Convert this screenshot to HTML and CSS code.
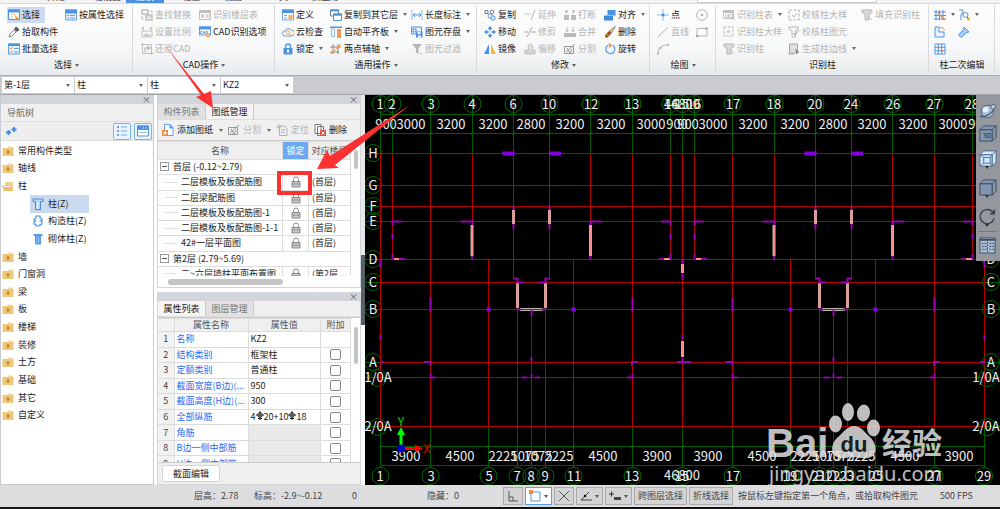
FILE: index.html
```html
<!DOCTYPE html>
<html lang="zh-CN">
<head>
<meta charset="utf-8">
<title>图纸管理</title>
<link rel="stylesheet" href="styles.css">
</head>
<body>
<svg class="sprite" aria-hidden="true">
  <symbol id="i-select" viewBox="0 0 12 12"><path d="M.5 1h11v9.500h-11z" fill="#fff" stroke="#4c94e2"/><path d="M0 .5h12v3H0z" fill="#4c94e2"/><path d="M3 5.500h5M3 8h2" stroke="#f0a850" stroke-dasharray="1.500 1"/><path d="M7 6l4 4-2 .2-1 1.600z" fill="#e8943c"/></symbol>
  <symbol id="i-prop" viewBox="0 0 12 12"><path d="M.5 1h11v10h-11z" fill="#e8f2fd" stroke="#5c9fe6"/><path d="M0 .5h12v4H0z" fill="#4c94e2"/><path d="M2 6.500h2M5 6.500h5M2 9h2M5 9h5" stroke="#5c9fe6"/></symbol>
  <symbol id="i-pick" viewBox="0 0 12 12"><path d="M1 11l1-3 4-4 2 2-4 4z" fill="#fff" stroke="#888"/><path d="M6 3l2-2.500 3.500 3L9 6z" fill="#555"/></symbol>
  <symbol id="i-batch" viewBox="0 0 12 12"><path d="M.5 1h11v10h-11z" fill="#eaf3fd" stroke="#5c9fe6"/><path d="M0 .5h12v2.500H0z" fill="#4c94e2"/><path d="M2 5l1 1 1.500-2M2 8.500l1 1 1.500-2" fill="none" stroke="#e8943c"/><path d="M6 5.500h4.500M6 9h4.500" stroke="#5c9fe6"/></symbol>
  <symbol id="i-find" viewBox="0 0 12 12"><path d="M1 1h6v4H1zM5 6h6v5H5z" fill="none" stroke="#b5b5b5" stroke-width="1.500"/><path d="M1 7v3h2M9 2h2v2" fill="none" stroke="#b5b5b5"/><path d="M6 8h4" stroke="#b5b5b5"/></symbol>
  <symbol id="i-table" viewBox="0 0 12 12"><path d="M.5 1.500h11v9h-11z" fill="none" stroke="#b5b5b5"/><path d="M.5 2h11v2H.5zM2 5.500h3v3H2z" fill="#b5b5b5"/><path d="M6.500 6h4M6.500 8h4" stroke="#b5b5b5"/></symbol>
  <symbol id="i-scale" viewBox="0 0 12 12"><path d="M1 5h10v6H1z" fill="none" stroke="#b5b5b5"/><path d="M2 10l3-3 2 2 1-1 2 2zM0 2.500L3 .5v4zM12 2.500L9 .5v4z" fill="#b5b5b5"/></symbol>
  <symbol id="i-cad" viewBox="0 0 12 12"><path d="M.5 1h11v8h-11z" fill="#fff" stroke="#5c9fe6"/><path d="M0 .5h12v3H0z" fill="#4c94e2"/><path d="M3 5.500H1.500v2H3M4 8l1-3 1 3M7 5.500v2h1.500v-2z" fill="none" stroke="#4c94e2" stroke-width=".8"/><circle cx="9" cy="9" r="2.200" fill="#f09a48"/><path d="M8 9h2M9 8v2" stroke="#fff" stroke-width=".6"/></symbol>
  <symbol id="i-restore" viewBox="0 0 12 12"><path d="M1.500 1.500h9v9h-9z" fill="none" stroke="#b5b5b5"/><path d="M4 9V5h4M6.500 3L9 5 6.500 7M0 1.500h3M9 10.500h3" fill="none" stroke="#b5b5b5" stroke-width="1.300"/></symbol>
  <symbol id="i-define" viewBox="0 0 12 12"><path d="M.5 1h11v10h-11z" fill="#fff" stroke="#6caaea"/><path d="M0 .5h12v3.500H0z" fill="#4c94e2"/><path d="M2 6.500h3M2 9h3" stroke="#6caaea"/><path d="M6.500 6h4v4h-4z" fill="#f6a860"/></symbol>
  <symbol id="i-cloud" viewBox="0 0 12 12"><path d="M3 10a2.500 2.500 0 010-5 3.300 3.300 0 016-1 3 3 0 01.5 6z" fill="#fff" stroke="#5c9fe6"/><circle cx="6" cy="6.300" r="1.800" fill="none" stroke="#f09a48"/><path d="M7.300 7.600l2 2" stroke="#f09a48"/></symbol>
  <symbol id="i-lockb" viewBox="0 0 12 12"><path d="M3.500 5V3.500a2.500 2.500 0 015 0V5" fill="none" stroke="#4c94e2" stroke-width="1.400"/><path d="M1.500 5h9v6.500h-9z" fill="#4c94e2"/><path d="M5 6.500h2v3H5z" fill="#fff"/></symbol>
  <symbol id="i-copyfl" viewBox="0 0 12 12"><path d="M.5 1h8v6h-8z" fill="#fff" stroke="#777"/><path d="M0 .5h9v2H0z" fill="#4c94e2"/><path d="M3.500 5h8v6.500h-8z" fill="#fff" stroke="#4c94e2"/><path d="M3 4.500h9v2.200H3z" fill="#4c94e2"/></symbol>
  <symbol id="i-align-slab" viewBox="0 0 12 12"><path d="M0 .5h12v1.500H0z" fill="#4c94e2"/><path d="M1.500 3h3v7.500h-3z" fill="#fff" stroke="#8bb9ec"/><path d="M7 3h4v9H7z" fill="#f3955b"/></symbol>
  <symbol id="i-axis" viewBox="0 0 12 12"><path d="M3 1v10M8 1v10M0 4h11M0 9h9" stroke="#888" fill="none"/><path d="M1 11L11 1" stroke="#f09a48"/></symbol>
  <symbol id="i-dim" viewBox="0 0 12 12"><path d="M1 1v10M11 1v10" stroke="#9cc0ea"/><path d="M2 6h8M4 4L2 6l2 2M8 4l2 2-2 2" fill="none" stroke="#4c94e2"/></symbol>
  <symbol id="i-save" viewBox="0 0 12 12"><path d="M.5 1h10v7h-10z" fill="#eaf3fd" stroke="#4c94e2"/><path d="M2 3h3v3H2z" fill="none" stroke="#4c94e2"/><path d="M5 5.500h6.500v6H5z" fill="#4c94e2"/><path d="M6.500 6h3v2h-3zM7 9.500h3v2H7z" fill="#fff"/></symbol>
  <symbol id="i-filter" viewBox="0 0 12 12"><path d="M1 1h10L7.500 5.500V11L5 9.500v-4z" fill="#aaa"/><path d="M9 10.500h2" stroke="#aaa"/></symbol>
  <symbol id="i-copy" viewBox="0 0 12 12"><path d="M1 1.500h3v3H1z" fill="none" stroke="#777"/><circle cx="8" cy="3" r="1.800" fill="none" stroke="#777"/><circle cx="6" cy="7" r="2" fill="#fff" stroke="#4c94e2"/><circle cx="9" cy="9" r="2.200" fill="#d6e8fc" stroke="#4c94e2"/></symbol>
  <symbol id="i-move" viewBox="0 0 12 12"><path d="M6 0l2.300 3H3.700zM6 12l2.300-3H3.700zM0 6l3-2.300v4.600zM12 6L9 3.700v4.600z" fill="#3e8be0"/><path d="M6 2v2.500M6 7.500V10M2 6h2.500M7.500 6H10" stroke="#3e8be0" stroke-width="1.400"/></symbol>
  <symbol id="i-mirror" viewBox="0 0 12 12"><path d="M5 1v10H0z" fill="#4c94e2"/><path d="M7 1v10h5z" fill="#f4b942"/></symbol>
  <symbol id="i-extend" viewBox="0 0 12 12"><path d="M0 5h7" stroke="#aaa" stroke-dasharray="2 1"/><path d="M7 11l4-10" stroke="#aaa"/></symbol>
  <symbol id="i-trim" viewBox="0 0 12 12"><path d="M0 6h4M7 6h5M3 11L8 1" stroke="#999" fill="none"/></symbol>
  <symbol id="i-offset" viewBox="0 0 12 12"><path d="M3 7h2C3 2 5 1 6.500 1S10 2 8 7h3v4H1V7z" fill="#ddd" stroke="#b5b5b5"/><path d="M1 9h10" stroke="#b5b5b5"/></symbol>
  <symbol id="i-break" viewBox="0 0 12 12"><path d="M0 6h5v5H0zM7 6h5v5H7z" fill="#b0b0b0"/><path d="M2.500 5V1M9.500 5V1M1 3l1.500-2L4 3M8 3l1.500-2L11 3" fill="none" stroke="#b0b0b0"/></symbol>
  <symbol id="i-merge" viewBox="0 0 12 12"><path d="M0 7h12v4H0z" fill="#b0b0b0"/><path d="M3 1v5M9 1v5M1.500 4L3 6l1.500-2M7.500 4L9 6l1.500-2" fill="none" stroke="#b0b0b0"/></symbol>
  <symbol id="i-split" viewBox="0 0 12 12"><path d="M.5 3.500h9v7h-9z" fill="none" stroke="#888"/><path d="M2 9l9-8M3 5l3 5 2-4" fill="none" stroke="#888"/></symbol>
  <symbol id="i-align" viewBox="0 0 12 12"><path d="M3.500 1h8v5h-8z" fill="#4c94e2"/><path d="M0 7h9v4.500H0z" fill="#3e8be0"/><path d="M0 6.500h12" stroke="#9cc0ea"/></symbol>
  <symbol id="i-erase" viewBox="0 0 12 12"><path d="M11.500.5L5 5l2.500 2z" fill="#f6c28a" stroke="#555" stroke-width=".6"/><path d="M5 5l2.500 2L4 11.500H1.500L1 9z" fill="#9b4a1c"/><path d="M2 8l3 2" stroke="#e8c33c"/></symbol>
  <symbol id="i-rotate" viewBox="0 0 12 12"><path d="M4 2.300A4.500 4.500 0 108.500 2.200" fill="none" stroke="#68a8ec" stroke-width="1.500"/><path d="M4.500 0l4 2-3.500 3z" fill="#f09a48"/></symbol>
  <symbol id="i-point" viewBox="0 0 12 12"><path d="M0 6h12M6 0v12" stroke="#8cb4e0"/><path d="M4.700 4.700h2.600v2.600H4.700z" fill="#3e8be0"/></symbol>
  <symbol id="i-line" viewBox="0 0 12 12"><path d="M1 11L11 1" stroke="#aaa"/></symbol>
  <symbol id="i-arc" viewBox="0 0 12 12"><path d="M1 11C1 5 4 2 11 2" fill="none" stroke="#aaa"/><path d="M0 9.500h2v2H0zM2.500 4h2v2h-2zM10 1h2v2h-2z" fill="#aaa"/></symbol>
  <symbol id="i-circle" viewBox="0 0 12 12"><circle cx="6" cy="6" r="5.300" fill="none" stroke="#aaa"/><path d="M5 5h2v2H5z" fill="#999"/></symbol>
  <symbol id="i-rect" viewBox="0 0 12 12"><path d="M1 2.500h10v7.500H1z" fill="none" stroke="#aaa"/><path d="M9.500 1.500h2v2h-2zM0 9h2v2H0z" fill="#888"/></symbol>
  <symbol id="i-rectable" viewBox="0 0 12 12"><path d="M.5 1.500h10v8h-10z" fill="none" stroke="#b5b5b5"/><path d="M.5 1h10v3H.5z" fill="#b5b5b5"/><path d="M2 6h4M2 8h4" stroke="#b5b5b5"/><circle cx="8" cy="7" r="2" fill="#fff" stroke="#aaa"/><path d="M9.500 8.500l2 2.500" stroke="#aaa"/></symbol>
  <symbol id="i-dash" viewBox="0 0 12 12"><path d="M1 1h9v9H1z" fill="none" stroke="#aaa" stroke-dasharray="2.500 1.200"/><path d="M4 4h3v3H4z" fill="#ccc"/></symbol>
  <symbol id="i-tcol" viewBox="0 0 12 12"><path d="M1 1h10v2.500L8 5v6H4V5L1 3.500z" fill="#d5d5d5" stroke="#aaa"/><path d="M7 7l4 4" stroke="#aaa"/></symbol>
  <symbol id="i-check" viewBox="0 0 12 12"><path d="M1 1h10v10H1z" fill="none" stroke="#aaa" stroke-width="1.200" stroke-dasharray="3 1.500"/><path d="M4 6l2 2 3-4" fill="none" stroke="#aaa"/></symbol>
  <symbol id="i-checkt" viewBox="0 0 12 12"><path d="M1 1h9v2L7.500 4.500V11H4V4.500L1 3z" fill="none" stroke="#aaa"/><path d="M5 7l2 2 4-5" fill="none" stroke="#999"/></symbol>
  <symbol id="i-edge" viewBox="0 0 12 12"><path d="M1.500 1h8v9h-8z" fill="#ddd" stroke="#999"/><path d="M7 5l4.500 4.500-2 .2-.8 2z" fill="#777"/><path d="M0 11h6" stroke="#999"/></symbol>
  <symbol id="i-grid1" viewBox="0 0 12 12"><path d="M2 1v10M5.500 1v10M9 1v10M0 3h12M0 6.500h12M0 10h12" stroke="#4c94e2"/><path d="M4 4l7 7" stroke="#f08a3c" stroke-width="1.500"/></symbol>
  <symbol id="i-search" viewBox="0 0 12 12"><path d="M1 1h4v3L3 5v6" fill="none" stroke="#4c94e2"/><circle cx="7.500" cy="6" r="2.500" fill="#fff" stroke="#4c94e2"/><path d="M9 8l1.500 1.500" stroke="#4c94e2"/><circle cx="10.500" cy="10" r="1.500" fill="#f09a1c"/></symbol>
  <symbol id="i-corner" viewBox="0 0 12 12"><path d="M1 1h4v5h5v5H1z" fill="#eaf3fd" stroke="#4c94e2"/><path d="M6 1.500c2.500 0 4 1 4.500 3" fill="none" stroke="#f08a3c"/></symbol>
  <symbol id="i-tilt" viewBox="0 0 12 12"><path d="M6 1l5 5-2.500.5L3 11.500.5 9l5-5.500z" fill="#a9cdf5" stroke="#4c94e2"/></symbol>
  <symbol id="i-grid2" viewBox="0 0 12 12"><path d="M1 1h10v10H1zM4.300 1v10M7.700 1v10M1 4.300h10M1 7.700h10" fill="#fff" stroke="#4c94e2"/><path d="M3.500 3.500h2v2h-2zM7 7h2v2H7z" fill="#e87a4c"/></symbol>
  <symbol id="i-folder" viewBox="0 0 12 12"><path d="M6 1.500h5V4H6z" fill="#f6d9a0"/><path d="M.5 3h11v8H.500z" fill="#eec67c"/><path d="M6 5v4M4 7h4" stroke="#bb8420" stroke-width="1.200"/></symbol>
  <symbol id="i-open" viewBox="0 0 12 12"><path d="M3 2h8v9H1l2-3z" fill="#f1d08d"/><path d="M0 5.500h9L11 11H2z" fill="#eec06c"/><path d="M2 6.500h6.500" stroke="#fff"/></symbol>
  <symbol id="i-col" viewBox="0 0 12 12"><path d="M1 1h10v2.500H8.500v8h-5v-8H1z" fill="#b9d7f8" stroke="#4c8bd0"/><path d="M5.500 4v7" stroke="#fff"/></symbol>
  <symbol id="i-gcol" viewBox="0 0 12 12"><path d="M4 1h4v2l2 1v1.500L8.500 6 10 7v2l-2 .5V11H4V9.500L2 9V7l1.500-1L2 5V4l2-1z" fill="#fff" stroke="#4c94e2" stroke-width="1.200"/></symbol>
  <symbol id="i-brick" viewBox="0 0 12 12"><path d="M1.500 1h9v2H9v8.500H3V3H1.500z" fill="#5c9fe6"/><path d="M4 5h3M6 7h2M4 9h3" stroke="#a9cdf5"/></symbol>
  <symbol id="i-add" viewBox="0 0 12 12"><path d="M2.500.5h5.500l3 3v8h-8.500z" fill="#fff" stroke="#5c9fe6"/><path d="M8 .5V4h3" fill="#5c9fe6" stroke="#5c9fe6"/><path d="M0 6h6v6H0z" fill="#ef8a3c"/><path d="M3 7v4M1 9h4" stroke="#fff"/></symbol>
  <symbol id="i-locate" viewBox="0 0 12 12"><path d="M3.500 2h5l2.500 2.500v7H3.500zM5 6h4M5 8.500h4" fill="none" stroke="#aaa"/><path d="M3 0v6M0 3h6" stroke="#aaa"/></symbol>
  <symbol id="i-del" viewBox="0 0 12 12"><path d="M1 .5h6v9H1zM3.500 2.500h6v9h-6z" fill="#fff" stroke="#777"/><path d="M6 6h6v6H6z" fill="#d9504c"/><path d="M7.500 7.500l3 3M10.500 7.500l-3 3" stroke="#fff"/></symbol>
  <symbol id="i-lock" viewBox="0 0 12 12"><path d="M3.500 5V3.500a2.500 2.500 0 015 0V5" fill="none" stroke="#888"/><path d="M2 5.500h8v5.500H2z" fill="#c9c9c9" stroke="#8b8b8b"/><path d="M2 8h8" stroke="#8b8b8b"/></symbol>
  <symbol id="i-cube" viewBox="0 0 20 20"><path d="M2 6h13v12H2z"/><path d="M2 6l4-4h13l-4 4zM15 18l4-4V2l-4 4z"/></symbol>
</svg>

<nav class="tabs" aria-label="功能区">
  <button class="t-first">开始</button><button>工程设置</button><button class="on">建模</button><button>工程量</button><button>视图</button><button>工具</button><button>云应用</button>
  <span class="tabsearch"></span>
</nav>

<header class="ribbon">
  <section class="group g-select">
    <div class="cmds">
      <button class="cmd on"><svg><use href="#i-select"/></svg>选择</button>
      <button class="cmd"><svg><use href="#i-pick"/></svg>拾取构件</button>
      <button class="cmd"><svg><use href="#i-batch"/></svg>批量选择</button>
      <button class="cmd"><svg><use href="#i-prop"/></svg>按属性选择</button>
    </div>
    <button class="title more">选择</button>
  </section>
  <section class="group g-cad">
    <div class="cmds">
      <button class="cmd" disabled><svg><use href="#i-find"/></svg>查找替换</button>
      <button class="cmd" disabled><svg><use href="#i-scale"/></svg>设置比例</button>
      <button class="cmd" disabled><svg><use href="#i-restore"/></svg>还原CAD</button>
      <button class="cmd" disabled><svg><use href="#i-table"/></svg>识别楼层表</button>
      <button class="cmd"><svg><use href="#i-cad"/></svg>CAD识别选项</button>
    </div>
    <button class="title more">CAD操作</button>
  </section>
  <section class="group g-common">
    <div class="cmds">
      <button class="cmd"><svg><use href="#i-define"/></svg>定义</button>
      <button class="cmd"><svg><use href="#i-cloud"/></svg>云检查</button>
      <button class="cmd more"><svg><use href="#i-lockb"/></svg>锁定</button>
      <button class="cmd more"><svg><use href="#i-copyfl"/></svg>复制到其它层</button>
      <button class="cmd more"><svg><use href="#i-align-slab"/></svg>自动平齐板</button>
      <button class="cmd more"><svg><use href="#i-axis"/></svg>两点辅轴</button>
      <button class="cmd more"><svg><use href="#i-dim"/></svg>长度标注</button>
      <button class="cmd more"><svg><use href="#i-save"/></svg>图元存盘</button>
      <button class="cmd" disabled><svg><use href="#i-filter"/></svg>图元过滤</button>
    </div>
    <button class="title more">通用操作</button>
  </section>
  <section class="group g-modify">
    <div class="cmds">
      <button class="cmd"><svg><use href="#i-copy"/></svg>复制</button>
      <button class="cmd"><svg><use href="#i-move"/></svg>移动</button>
      <button class="cmd"><svg><use href="#i-mirror"/></svg>镜像</button>
      <button class="cmd" disabled><svg><use href="#i-extend"/></svg>延伸</button>
      <button class="cmd" disabled><svg><use href="#i-trim"/></svg>修剪</button>
      <button class="cmd" disabled><svg><use href="#i-offset"/></svg>偏移</button>
      <button class="cmd" disabled><svg><use href="#i-break"/></svg>打断</button>
      <button class="cmd" disabled><svg><use href="#i-merge"/></svg>合并</button>
      <button class="cmd" disabled><svg><use href="#i-split"/></svg>分割</button>
      <button class="cmd more"><svg><use href="#i-align"/></svg>对齐</button>
      <button class="cmd"><svg><use href="#i-erase"/></svg>删除</button>
      <button class="cmd"><svg><use href="#i-rotate"/></svg>旋转</button>
    </div>
    <button class="title more">修改</button>
  </section>
  <section class="group g-draw">
    <div class="cmds">
      <button class="cmd"><svg><use href="#i-point"/></svg>点</button>
      <button class="cmd" disabled><svg><use href="#i-line"/></svg>直线</button>
      <button class="cmd" disabled aria-label="弧线"><svg><use href="#i-arc"/></svg></button>
      <button class="cmd" disabled aria-label="圆"><svg><use href="#i-circle"/></svg></button>
      <button class="cmd" disabled aria-label="矩形"><svg><use href="#i-rect"/></svg></button>
    </div>
    <button class="title more">绘图</button>
  </section>
  <section class="group g-recog">
    <div class="cmds">
      <button class="cmd more" disabled><svg><use href="#i-rectable"/></svg>识别柱表</button>
      <button class="cmd" disabled><svg><use href="#i-dash"/></svg>识别柱大样</button>
      <button class="cmd" disabled><svg><use href="#i-tcol"/></svg>识别柱</button>
      <button class="cmd" disabled><svg><use href="#i-check"/></svg>校核柱大样</button>
      <button class="cmd" disabled><svg><use href="#i-checkt"/></svg>校核柱图元</button>
      <button class="cmd more" disabled><svg><use href="#i-edge"/></svg>生成柱边线</button>
      <button class="cmd" disabled><svg><use href="#i-tcol"/></svg>填充识别柱</button>
    </div>
    <button class="title">识别柱</button>
  </section>
  <section class="group g-edit">
    <div class="cmds">
      <button class="cmd more" aria-label="调整柱网"><svg><use href="#i-grid1"/></svg></button>
      <button class="cmd" aria-label="转角"><svg><use href="#i-corner"/></svg></button>
      <button class="cmd" aria-label="网格"><svg><use href="#i-grid2"/></svg></button>
      <button class="cmd more" aria-label="查改标注"><svg><use href="#i-search"/></svg></button>
      <button class="cmd" aria-label="设置斜柱"><svg><use href="#i-tilt"/></svg></button>
    </div>
    <button class="title">柱二次编辑</button>
  </section>
</header>

<div class="context">
  <label class="combo"><select aria-label="楼层"><option>第-1层</option></select></label>
  <label class="combo"><select aria-label="类别"><option>柱</option></select></label>
  <label class="combo"><select aria-label="类型"><option>柱</option></select></label>
  <label class="combo"><select aria-label="构件"><option>KZ2</option></select></label>
</div>

<main class="work">
  <aside class="nav">
    <div class="strip"><button aria-label="关闭导航树">×</button></div>
    <h2>导航树</h2>
    <div class="navbar">
      <button class="plus" aria-label="添加"><svg viewBox="0 0 12 12"><path d="M3.500 5v5M1 7.500h5M9 2v5M6.500 4.500h5" stroke="#3e8be0" stroke-width="1.800"/></svg></button>
      <button class="view" aria-label="列表视图"><svg viewBox="0 0 12 12"><path d="M1 2h2M1 6h2M1 10h2" stroke="#3e8be0" stroke-width="1.500"/><path d="M5 2h6M5 6h6M5 10h6" stroke="#6caaea"/></svg></button>
      <button class="view" aria-label="窗口视图"><svg viewBox="0 0 12 12"><path d="M.5 1h11v10H.5z" fill="#fff" stroke="#4c94e2"/><path d="M0 .5h12V5H0z" fill="#4c94e2"/><path d="M6 3h1M8.500 3h1" stroke="#fff"/><path d="M2 7.500h8" stroke="#9cc0ea"/></svg></button>
    </div>
    <ul class="tree">
      <li><svg><use href="#i-folder"/></svg>常用构件类型</li>
      <li><svg><use href="#i-folder"/></svg>轴线</li>
      <li><svg><use href="#i-open"/></svg>柱</li>
      <li class="leaf on"><svg><use href="#i-col"/></svg>柱(Z)</li>
      <li class="leaf"><svg><use href="#i-gcol"/></svg>构造柱(Z)</li>
      <li class="leaf"><svg><use href="#i-brick"/></svg>砌体柱(Z)</li>
      <li><svg><use href="#i-folder"/></svg>墙</li>
      <li><svg><use href="#i-folder"/></svg>门窗洞</li>
      <li><svg><use href="#i-folder"/></svg>梁</li>
      <li><svg><use href="#i-folder"/></svg>板</li>
      <li><svg><use href="#i-folder"/></svg>楼梯</li>
      <li><svg><use href="#i-folder"/></svg>装修</li>
      <li><svg><use href="#i-folder"/></svg>土方</li>
      <li><svg><use href="#i-folder"/></svg>基础</li>
      <li><svg><use href="#i-folder"/></svg>其它</li>
      <li><svg><use href="#i-folder"/></svg>自定义</li>
    </ul>
  </aside>

  <div class="docks">
    <section class="dock drawings">
      <div class="strip"><button aria-label="关闭图纸管理">×</button></div>
      <div class="docktabs"><button>构件列表</button><button class="on">图纸管理</button></div>
      <div class="tools">
        <button class="cmd more"><svg><use href="#i-add"/></svg>添加图纸</button>
        <button class="cmd more" disabled><svg><use href="#i-split"/></svg>分割</button>
        <button class="cmd" disabled><svg><use href="#i-locate"/></svg>定位</button>
        <button class="cmd"><svg><use href="#i-del"/></svg>删除</button>
      </div>
      <div class="scroller">
        <div class="clip">
          <table class="sheet">
            <colgroup><col><col class="c-lock"><col class="c-floor"></colgroup>
            <thead><tr><th>名称</th><th class="hot">锁定</th><th>对应楼层</th></tr></thead>
            <tbody>
              <tr class="cat"><td colspan="3"><i class="fold"></i>首层 (-0.12~2.79)</td></tr>
              <tr><td>二层模板及板配筋图</td><td class="cur"><svg><use href="#i-lock"/></svg></td><td>(首层)</td></tr>
              <tr><td>二层梁配筋图</td><td><svg><use href="#i-lock"/></svg></td><td>(首层)</td></tr>
              <tr><td>二层模板及板配筋图-1</td><td><svg><use href="#i-lock"/></svg></td><td>(首层)</td></tr>
              <tr><td>二层模板及板配筋图-1-1</td><td><svg><use href="#i-lock"/></svg></td><td>(首层)</td></tr>
              <tr><td>42#一层平面图</td><td><svg><use href="#i-lock"/></svg></td><td>(首层)</td></tr>
              <tr class="cat"><td colspan="3"><i class="fold"></i>第2层 (2.79~5.69)</td></tr>
              <tr><td>二~六层墙柱平面布置图</td><td><svg><use href="#i-lock"/></svg></td><td>(第2层 ...</td></tr>
            </tbody>
          </table>
        </div>
        <div class="vbar"><span></span></div>
      </div>
      <div class="hbar"><span></span></div>
    </section>

    <section class="dock props">
      <div class="strip"><button aria-label="关闭属性列表">×</button></div>
      <div class="docktabs"><button class="on">属性列表</button><button>图层管理</button></div>
      <div class="scroller">
        <div class="clip">
          <table class="attr">
            <colgroup><col class="c-no"><col class="c-key"><col><col class="c-add"></colgroup>
            <thead><tr><th></th><th>属性名称</th><th>属性值</th><th>附加</th></tr></thead>
            <tbody>
              <tr><th>1</th><td>名称</td><td>KZ2</td><td></td></tr>
              <tr><th>2</th><td>结构类别</td><td>框架柱</td><td><input type="checkbox" aria-label="附加结构类别"></td></tr>
              <tr><th>3</th><td>定额类别</td><td>普通柱</td><td><input type="checkbox" aria-label="附加定额类别"></td></tr>
              <tr><th>4</th><td>截面宽度(B边)(...</td><td>950</td><td><input type="checkbox" aria-label="附加截面宽度"></td></tr>
              <tr><th>5</th><td>截面高度(H边)(...</td><td>300</td><td><input type="checkbox" aria-label="附加截面高度"></td></tr>
              <tr><th>6</th><td>全部纵筋</td><td>4<svg class="bar" viewBox="0 0 8 9"><circle cx="4" cy="4" r="2.300"/><path d="M4 0v9M0 4h8M2 7.500h4"/></svg>20+10<svg class="bar" viewBox="0 0 8 9"><circle cx="4" cy="4" r="2.300"/><path d="M4 0v9M0 4h8M2 7.500h4"/></svg>18</td><td><input type="checkbox" aria-label="附加全部纵筋"></td></tr>
              <tr><th>7</th><td>角筋</td><td class="off"></td><td><input type="checkbox" aria-label="附加角筋"></td></tr>
              <tr><th>8</th><td>B边一侧中部筋</td><td class="off"></td><td><input type="checkbox" aria-label="附加B边中部筋"></td></tr>
              <tr><th>9</th><td>H边一侧中部筋</td><td class="off"></td><td><input type="checkbox" aria-label="附加H边中部筋"></td></tr>
            </tbody>
          </table>
        </div>
        <div class="vbar low"><span></span></div>
      </div>
      <div class="foot"><button>截面编辑</button></div>
    </section>
  </div>

  <div class="splitter"></div>

  <section class="canvas">
    <svg class="plan" viewBox="365 95 635 390" preserveAspectRatio="xMinYMin slice">
      <defs>
        <g id="unit">
          <path class="red" d="M380.500 153V427M392.500 153V259M430.500 153V427M472.500 153V259M513.500 153V279M549.500 153V279M590.500 153V259M632.500 153V427M670.500 153V259M488.500 259V427M517.500 283V427M531.500 309V427M545.500 283V427M573.500 259V427"/>
          <path class="green" d="M380.500 95V153M392.500 95V153M430.500 95V153M472.500 95V153M513.500 95V153M549.500 95V153M590.500 95V153M632.500 95V153M670.500 95V153M380.500 427V468M430.500 427V468M488.500 427V468M517.500 427V468M531.500 427V468M545.500 427V468M573.500 427V468M632.500 427V468"/>
          <path class="green" d="M429 135l3-3M471 135l3-3M512 135l3-3M548 135l3-3M589 135l3-3M631 135l3-3M379 448l3-3M429 448l3-3M487 448l3-3M572 448l3-3M631 448l3-3"/>
          <path class="edge" d="M513.500 210v14M549.500 210v14M472 225v31M590.500 225v31M517.500 283v25M545.500 283v25M520 309.500h23"/>
          <path class="wall" d="M513.500 210v14M549.500 210v14M472 225v31M590.500 225v31M517.500 283v25M545.500 283v25M394 259h6M664 259h6"/>
          <path class="red" d="M520 309.500h23"/>
          <path class="post wide" d="M502.500 153.500h12M549 153.500h12M486.500 309.500h4M571.500 309.500h4"/>
          <path class="post" d="M513.500 205v5M513.500 224v5M549.500 205v5M549.500 224v5M402 221.500h-9.500V225M461 221.500h11.500V225M602 221.500h-11.500V225M661 221.500h9.500V225M472 256v4M590.500 256v4M392.500 234v5M392.500 254v5M399 259h6M670.500 234v5M670.500 254v5M659 259h5M380.500 259v9M430.500 297v15M632.500 297v15M513 278.500h4.500v4h7M550 278.500h-4.500v4h-7M517 309.500h4M541 309.500h5M531.500 309v7M380.500 335v5M380.500 362h4M424 362h6.500v4M638 362h-6v4M430.500 374v3.500h5M632.500 374v3.500h-5M531.500 357v5M531.500 374v4M522 377.500h5M535 377.500h5"/>
          <g class="ring"><circle cx="380.500" cy="104" r="8.500"/><circle cx="392.500" cy="104" r="8.500"/><circle cx="430.500" cy="104" r="8.500"/><circle cx="472.500" cy="104" r="8.500"/><circle cx="513.500" cy="104" r="8.500"/><circle cx="549.500" cy="104" r="8.500"/><circle cx="590.500" cy="104" r="8.500"/><circle cx="632.500" cy="104" r="8.500"/><circle cx="670.500" cy="104" r="8.500"/><circle cx="380.500" cy="476" r="8.500"/><circle cx="430.500" cy="476" r="8.500"/><circle cx="488.500" cy="476" r="8.500"/><circle cx="517.500" cy="476" r="8.500"/><circle cx="531.500" cy="476" r="8.500"/><circle cx="545.500" cy="476" r="8.500"/><circle cx="573.500" cy="476" r="8.500"/><circle cx="632.500" cy="476" r="8.500"/></g>
          <g class="dim"><text x="386" y="129">900</text><text x="411" y="129">3000</text><text x="451" y="129">3200</text><text x="493" y="129">3200</text><text x="531" y="129">2800</text><text x="570" y="129">3200</text><text x="611" y="129">3200</text><text x="651" y="129">3000</text><text x="677" y="129">900</text><text x="406" y="461">3900</text><text x="460" y="461">4500</text><text x="503" y="461">2225</text><text x="525" y="461">1075</text><text x="538" y="461">1075</text><text x="559" y="461">2225</text><text x="603" y="461">4500</text><text x="657" y="461">3900</text></g>
        </g>
        <g id="bubbles" class="ring"><circle cx="373" cy="153" r="8.500"/><circle cx="373" cy="185" r="8.500"/><circle cx="373" cy="206" r="8.500"/><circle cx="373" cy="221" r="8.500"/><circle cx="373" cy="259" r="8.500"/><circle cx="373" cy="282" r="8.500"/><circle cx="373" cy="309" r="8.500"/><circle cx="373" cy="362" r="8.500"/></g>
        <g id="rows" class="dim"><text x="373" y="158">H</text><text x="373" y="190">G</text><text x="373" y="211">F</text><text x="373" y="226">E</text><text x="373" y="264">D</text><text x="373" y="287">C</text><text x="373" y="314">B</text><text x="373" y="367">A</text></g>
      </defs>
      <path class="green" d="M380 114.500h604M380 133.500h604M380 446.500h604M380 465.500h604M365 153.500h619M365 185.500h15M365 206.500h15M365 221.500h15M365 259.500h15M365 282.500h635M365 309.500h635M365 362.500h635M365 377.500h635M365 426.500h635"/>
      <path class="red" d="M381 153.500h603M381 185.500h603M381 206.500h603M381 221.500h603M381 259.500h603M381 282.500h603M381 309.500h603M381 362.500h603M381 377.500h603M381 426.500h603M984.500 153V427"/>
      <use href="#bubbles"/><use href="#bubbles" x="618"/>
      <g class="ring"><circle cx="378" cy="378" r="8.500"/><circle cx="378" cy="427" r="8.500"/><circle cx="987" cy="378" r="8.500"/><circle cx="987" cy="427" r="8.500"/></g>
      <use href="#unit"/><use href="#unit" x="302"/>
      <use href="#rows"/><use href="#rows" x="618"/>
      <path class="green" d="M984.500 427V468M983 448l3-3"/>
      <path class="edge" d="M682.500 264v9M682.500 341v16"/><path class="wall" d="M682.500 264v9M682.500 341v16"/>
      <path class="post" d="M682.500 259v4M682.500 274v6M682.500 358v5M677 362h14M984.500 259v9M984.500 335v5M980 362h5"/>
      <g class="ring"><circle cx="984" cy="476" r="8.500"/></g>
      <g class="dim">
        <text x="378" y="382">1/0A</text><text x="378" y="431">2/0A</text><text x="986" y="382">1/0A</text><text x="986" y="431">2/0A</text>
        <text x="380" y="109">1</text><text x="392" y="109">2</text><text x="431" y="109">3</text><text x="472" y="109">4</text><text x="513" y="109">6</text><text x="549" y="109">10</text><text x="591" y="109">12</text><text x="632" y="109">13</text><text x="671" y="109">14</text><text x="682" y="109">46800</text><text x="682" y="109">15</text><text x="694" y="109">16</text><text x="733" y="109">17</text><text x="774" y="109">18</text><text x="815" y="109">20</text><text x="851" y="109">24</text><text x="893" y="109">26</text><text x="934" y="109">27</text><text x="972" y="109">28</text>
        <text x="380" y="481">1</text><text x="431" y="481">3</text><text x="489" y="481">5</text><text x="517" y="481">7</text><text x="531" y="481">8</text><text x="545" y="481">9</text><text x="574" y="481">11</text><text x="632" y="481">13</text><text x="682" y="480">46800</text><text x="682" y="481">15</text><text x="733" y="481">17</text><text x="790" y="481">19</text><text x="819" y="481">21</text><text x="833" y="481">22</text><text x="847" y="481">23</text><text x="876" y="481">25</text><text x="934" y="481">27</text><text x="984" y="481">29</text>
      </g>
      <g class="ucs"><path d="M401 446V435" stroke="#0f0" stroke-width="3"/><path d="M401 427l4 8h-8z" fill="#0f0"/><path d="M402 448.500h13" stroke="#f00" stroke-width="3"/><path d="M423 448.500l-8-4v8z" fill="#f00"/><circle cx="401" cy="448.500" r="4" fill="#0000c8"/><text x="401" y="426" fill="#0d0">Y</text><text x="427" y="453" fill="#e00">X</text></g>
      <g class="mark">
        <text class="bai" x="766" y="457">Bai</text>
        <ellipse cx="835.500" cy="424" rx="6.500" ry="8.500"/><ellipse cx="848" cy="412" rx="6" ry="9"/><ellipse cx="863.500" cy="413" rx="6.500" ry="8.500" transform="rotate(10 863.500 413)"/><ellipse cx="873.500" cy="428" rx="6.500" ry="8.500"/>
        <path d="M854 426c7 0 10 6 15 10 8 7 10 20-1 22-6 1-10-1-15-1s-8 2-13 1c-10-2-10-14-2-21 5-4 9-11 16-11z"/>
        <text class="du" x="854" y="452">du</text>
        <text class="jy" x="882" y="454">经验</text>
        <text class="url" x="769" y="481">jingyan.baidu.com</text>
      </g>
    </svg>
    <div class="viewbar">
      <button aria-label="动态观察"><svg viewBox="0 0 20 20"><circle cx="10" cy="10" r="6.500" fill="#a9c0dc" stroke="#4f6078"/><circle cx="8" cy="8" r="3" fill="#e6f0fa"/><path d="M2 15c4 2 15-3 16-11" fill="none" stroke="#4f6078" stroke-width="1.500"/><circle cx="16" cy="5" r="2.500" fill="#b6c8de" stroke="#4f6078"/></svg></button>
      <button aria-label="三维"><svg class="cube" viewBox="0 0 20 20"><use href="#i-cube"/><text x="5" y="15">3D</text></svg></button>
      <button class="drop" aria-label="线框"><svg class="cube lit" viewBox="0 0 20 20"><use href="#i-cube"/><path d="M6 9h7v6H6zM2 6l4 3M15 6l-2 3M2 18l4-3M15 18l-2-3"/></svg></button>
      <button class="drop" aria-label="实体"><svg class="cube" viewBox="0 0 20 20"><use href="#i-cube"/></svg></button>
      <button class="drop" aria-label="旋转视图"><svg viewBox="0 0 20 20"><path d="M16 6a7.500 7.500 0 101 6" fill="none" stroke="#3c444e" stroke-width="1.600"/><path d="M18 2v6h-6z" fill="#3c444e"/></svg></button>
      <button class="last" aria-label="显示设置"><svg viewBox="0 0 20 20"><path d="M2 2h16v16H2z" fill="#a9bdd6" stroke="#3d4d62"/><path d="M2 4h16" stroke="#3d4d62" stroke-width="2"/><path d="M4 8h5M4 11h5M4 14h5M12 8h5M12 11h5M12 14h5M10 6v11" stroke="#3d4d62" stroke-dasharray="2 1"/></svg></button>
    </div>
  </section>

  <svg class="notes" aria-hidden="true">
    <path d="M165 45l39 49 7-3 2 17-17-11 5-2z"/>
    <path d="M410 105l-75 60 4 3-22 1 10-19 3 6z"/>
    <path class="frame" d="M279 173h31v20h-31z"/>
  </svg>
</main>

<footer class="status">
  <span class="s-floor">层高：2.78</span>
  <span class="s-level">标高：-2.9~-0.12</span>
  <span class="s-zero">0</span>
  <span class="s-hide">隐藏：0</span>
  <div class="snaps">
    <button class="sq" aria-label="正交"><svg viewBox="0 0 12 12"><path d="M2 1v10h9M2 7h4v4" fill="none" stroke="#555"/></svg></button>
    <button class="sq on drop2" aria-label="捕捉"><svg viewBox="0 0 12 12"><path d="M2 2h9v9H2z" fill="none" stroke="#4c94e2"/><path d="M0 0h4v4H0z" fill="#f08a3c"/></svg></button>
    <button class="sq" aria-label="交点"><svg viewBox="0 0 12 12"><path d="M1 1l10 10M11 1L1 11" stroke="#555"/></svg></button>
    <button class="sq drop2" aria-label="角度"><svg viewBox="0 0 12 12"><path d="M9 2L1 10h11" fill="none" stroke="#444"/><circle cx="5" cy="6" r="1.200"/></svg></button>
    <button class="sq drop2" aria-label="偏移"><svg viewBox="0 0 12 12"><path d="M0 4h5M2.500 1.500v5" stroke="#333"/><path d="M5 7h7v3H5z" fill="#444"/></svg></button>
    <button>跨图层选择</button>
    <button>折线选择</button>
  </div>
  <span class="s-tip">按鼠标左键指定第一个角点，或拾取构件图元</span>
  <span class="s-fps">500 FPS</span>
</footer>
</body>
</html>
```
FILE: styles.css
```css
* { box-sizing: border-box; }
body {
  margin: 0;
  height: 100vh;
  display: flex;
  flex-direction: column;
  background: #141212;
  color: #222;
  font: 9px/12px "Noto Sans CJK SC", "Noto Sans", sans-serif;
  overflow: hidden;
}
button, select, input { font: inherit; color: inherit; margin: 0; padding: 0; border: 0; background: none; white-space: nowrap; }
svg { display: block; flex: none; }
.sprite { position: absolute; width: 0; height: 0; }

/* tab strip */
.tabs { height: 3px; flex: none; display: flex; align-items: flex-end; overflow: hidden; background: #f3f3f5; padding-left: 32px; }
.tabs button { width: 46px; height: 13px; color: #444; }
.tabs .t-first { width: 48px; }
.tabs .on { width: 38px; background: #4a90e2; color: #fff; }
.tabsearch { width: 180px; height: 3px; margin-left: auto; margin-right: 123px; background: #fff; border: 1px solid #ccc; border-top: 0; }

/* ribbon */
.ribbon { display: flex; flex: none; height: 73px; border-top: 1px solid #d8d9db; border-bottom: 1px solid #a8abb0; background: linear-gradient(#fdfdfd, #f7f8f9 60%, #e8ebed); }
.group { display: flex; flex-direction: column; flex: none; padding: 2px 0; position: relative; }
.group::after { content: ""; width: 1px; background: #d8dadc; position: absolute; right: 0; top: 1px; bottom: 2px; }
.cmds { display: grid; grid-auto-flow: column; grid-template-rows: repeat(3, 17px); justify-items: start; align-items: center; padding-left: 8px; }
.cmd { display: flex; align-items: center; gap: 2px; height: 14px; }
.cmd svg { width: 12px; height: 12px; }
.cmd.on { background: #c9daf1; box-shadow: 0 0 0 1px #c9daf1; padding-right: 4px; }
.cmd:disabled { color: #b4b4b4; }
.cmd:disabled svg { opacity: .85; }
.more::after { content: ""; border: 2px solid transparent; border-top: 3px solid #666; border-bottom: 0; margin-left: 3px; flex: none; }
.title { display: flex; align-items: center; justify-content: center; height: 18px; }
.g-select { width: 133px; } .g-select .cmds { grid-template-columns: 57px 1fr; }
.g-cad { width: 142px; } .g-cad .cmds { grid-template-columns: 58px 1fr; }
.g-common { width: 202px; } .g-common .cmds { grid-template-columns: 48px 81px 1fr; padding-left: 7px; }
.g-modify { width: 173px; } .g-modify .cmds { grid-template-columns: 40px 40px 40px 1fr; padding-left: 7px; }
.g-draw { width: 66px; } .g-draw .cmds { grid-template-columns: 39px 1fr; padding-left: 7px; }
.g-recog { width: 213px; } .g-recog .cmds { grid-template-columns: 65px 73px 1fr; padding-left: 7px; }
.g-edit { width: 66px; } .g-edit .cmds { grid-template-columns: 24px 1fr; padding-left: 5px; }

/* context selectors */
.context { display: flex; flex: none; gap: 1px; height: 18px; padding: 1px 2px; background: #c9cbd0; }
.combo { position: relative; width: 72px; background: #fff; }
.combo select { appearance: none; width: 100%; height: 16px; padding-left: 2px; }
.combo::after { content: ""; position: absolute; right: 4px; top: 7px; border: 2px solid transparent; border-top: 3px solid #666; border-bottom: 0; pointer-events: none; }

/* workspace */
.work { flex: 1; display: flex; min-height: 0; position: relative; background: #f0f0f1; border-top: 1px solid #a0a3a8; }
.strip { height: 9px; flex: none; background: #d2d5dc; display: flex; justify-content: flex-end; padding-right: 3px; }
.strip button { line-height: 8px; width: 8px; color: #555; }
.nav { width: 154px; flex: none; display: flex; flex-direction: column; background: #fff; border: 1px solid #c8cbd2; border-top: 0; }
.nav h2 { margin: 0; padding: 0 6px; font-size: 9px; font-weight: 400; line-height: 17px; background: #f0f0f0; color: #666; border-bottom: 1px solid #ddd; }
.navbar { display: flex; flex: none; align-items: center; gap: 3px; height: 19px; background: #eee; padding: 0 1px 0 4px; border-bottom: 1px solid #ddd; }
.navbar svg { width: 12px; height: 12px; }
.plus { margin-right: auto; }
.view { width: 18px; height: 17px; display: grid; place-items: center; border: 1px solid #7db4f0; border-radius: 2px; background: #eaf4ff; }
.tree { list-style: none; margin: 0; padding: 1px 0 0; display: grid; grid-template-rows: repeat(16, 1fr); height: 283px; }
.tree li { display: flex; align-items: center; gap: 4px; padding-left: 1px; }
.tree svg { width: 12px; height: 12px; }
.tree .leaf { margin-left: 29px; margin-right: 64px; padding-left: 2px; }
.tree .on { background: #c9d9f0; }

.docks { flex: none; width: 207px; display: flex; flex-direction: column; gap: 4px; padding-left: 3px; background: #fff; }
.dock { display: flex; flex-direction: column; min-height: 0; background: #f0f0f0; border: 1px solid #d2d5da; border-top: 0; }
.drawings { height: 193px; flex: none; }
.props { flex: 1; }
.docktabs { display: flex; height: 16px; flex: none; border-bottom: 1px solid #ddd; }
.docktabs button { width: 48px; background: #e1e1e1; color: #777; border-right: 1px solid #ccc; }
.docktabs .on { background: #f4f4f4; color: #222; }
.tools { display: flex; align-items: center; gap: 5px; height: 20px; flex: none; padding-left: 4px; }
.tools .cmd { gap: 3px; }
.scroller { flex: 1; display: flex; min-height: 0; background: #fff; border-top: 1px solid #ccc; }
.clip { width: 193px; overflow: hidden; }
.vbar { flex: 1; padding: 9px 2px 0 3px; }
.vbar span { display: block; height: 19px; border-radius: 3px; background: #c4c4c4; }
.vbar.low span { height: 37px; }
.hbar { height: 11px; padding: 3px 0 0 10px; background: #fff; flex: none; }
.hbar span { display: block; width: 115px; height: 6px; border-radius: 3px; background: #c4c4c4; }

table { border-collapse: collapse; table-layout: fixed; width: 100%; }
th, td { padding: 0; border: 1px solid #dcdcdc; font-weight: 400; white-space: nowrap; overflow: hidden; line-height: 12px; }
thead th { background: #efefef; color: #555; }
.sheet { height: 141px; }
.sheet th, .sheet td { border-left: 0; }
.sheet thead tr { height: 18px; }
.c-lock { width: 26px; }
.c-floor { width: 42px; }
.sheet .hot { background: #6aaaf2; color: #fff; }
.sheet td:first-child { padding-left: 23px; background: linear-gradient(#ddd, #ddd) 7px 50% / 12px 1px no-repeat; }
.sheet td:last-child { padding-left: 3px; }
.sheet .cat td { padding-left: 2px; background: none; }
.fold { display: inline-block; width: 9px; height: 9px; margin-right: 4px; vertical-align: -1px; border: 1px solid #999; background: linear-gradient(#555, #555) 50% 50% / 5px 1px no-repeat; }
.sheet td svg { width: 12px; height: 12px; margin: 0 auto; }
.attr { height: 154px; }
.attr th:first-child { border-left: 0; background: #f2f2f2; color: #444; }
.c-no { width: 16px; } .c-key { width: 74px; } .c-add { width: 30px; }
.attr td { padding-left: 2px; }
.attr td:nth-child(2) { color: #2c6af0; }
.attr td:last-child { padding: 0; text-align: center; }
.attr .off { background: #e9e9e9; }
.attr input { appearance: none; display: block; width: 11px; height: 11px; margin: 0 auto; border: 1px solid #888; border-radius: 2px; background: #fff; }
.bar { display: inline-block; width: 8px; height: 9px; fill: none; stroke: #222; }
.foot { height: 22px; flex: none; padding: 2px 4px; border-top: 1px solid #ccc; }
.foot button { width: 58px; height: 17px; background: #fff; border: 1px solid #d5d5d5; border-radius: 2px; }
.splitter { width: 4px; flex: none; background: linear-gradient(#e9e9ec 41%, #566069 41%, #566069 59%, #fff 59%); }

/* drawing area */
.canvas { flex: 1; min-width: 0; position: relative; background: #000; overflow: hidden; }
.plan { position: absolute; inset: 0; width: 100%; height: 100%; }
.red { stroke: #b40000; fill: none; }
.green { stroke: #005c00; fill: none; }
.edge { stroke: #b8b8a8; stroke-width: 3px; fill: none; }
.wall { stroke: #ff8c8c; stroke-width: 2px; fill: none; }
.post { stroke: #9a00b4; stroke-width: 2px; fill: none; }
.wide { stroke: #8400e0; stroke-width: 4px; }
.ring circle { fill: none; stroke: #006a00; }
.dim { fill: #eee; font-size: 13px; text-anchor: middle; }
.ucs text { font-size: 12px; text-anchor: middle; }
.mark { fill: #e0e0e0; opacity: .85; }
.bai { font: 700 40px "Liberation Sans", sans-serif; }
.du { font: 700 22px "Liberation Sans", sans-serif; fill: #222; text-anchor: middle; }
.jy { font-size: 30px; font-weight: 700; }
.url { font: 20px "Noto Sans", sans-serif; }
.viewbar { position: absolute; top: 0; right: 0; width: 24px; height: 166px; padding: 5px 0 0 2px; background: #94979d; }
.viewbar button { display: block; position: relative; height: 22px; }
.viewbar svg { width: 19px; height: 19px; }
.viewbar .drop { height: 29px; }
.viewbar .drop::after { content: ""; position: absolute; left: 7px; top: 22px; border: 2px solid transparent; border-top: 3px solid #333; border-bottom: 0; }
.viewbar .last { border-top: 1px solid #777; padding-top: 3px; height: 24px; }
.cube { fill: #8296b0; stroke: #3e4d60; font-size: 7px; }
.cube text { fill: #223; stroke: none; }
.lit { fill: #d2e8ff; stroke: #4a6a90; }
.notes { position: absolute; left: 0; top: -95px; width: 420px; height: 200px; pointer-events: none; fill: #fb3232; }
.notes .frame { fill: none; stroke: #fb3232; stroke-width: 4px; }

/* status bar */
.status { display: flex; flex: none; align-items: center; height: 22px; margin-bottom: 2px; padding-left: 194px; background: #dddde0; color: #444; white-space: nowrap; }
.s-floor { width: 60px; }
.s-level { width: 98px; }
.s-zero { width: 75px; }
.s-hide { width: 76px; }
.snaps { display: flex; gap: 2px; margin-right: 5px; }
.snaps button { height: 18px; padding: 0 3px; border: 1px solid #aaa; background: #d4d4d6; }
.snaps .sq { display: flex; align-items: center; justify-content: center; gap: 3px; min-width: 18px; }
.snaps svg { width: 12px; height: 12px; }
.snaps .on { border-color: #5c9fe6; background: #fff; }
.drop2::after { content: ""; border: 2px solid transparent; border-top: 3px solid #555; border-bottom: 0; }
.s-tip { flex: 1; }
.s-fps { width: 60px; }
```
